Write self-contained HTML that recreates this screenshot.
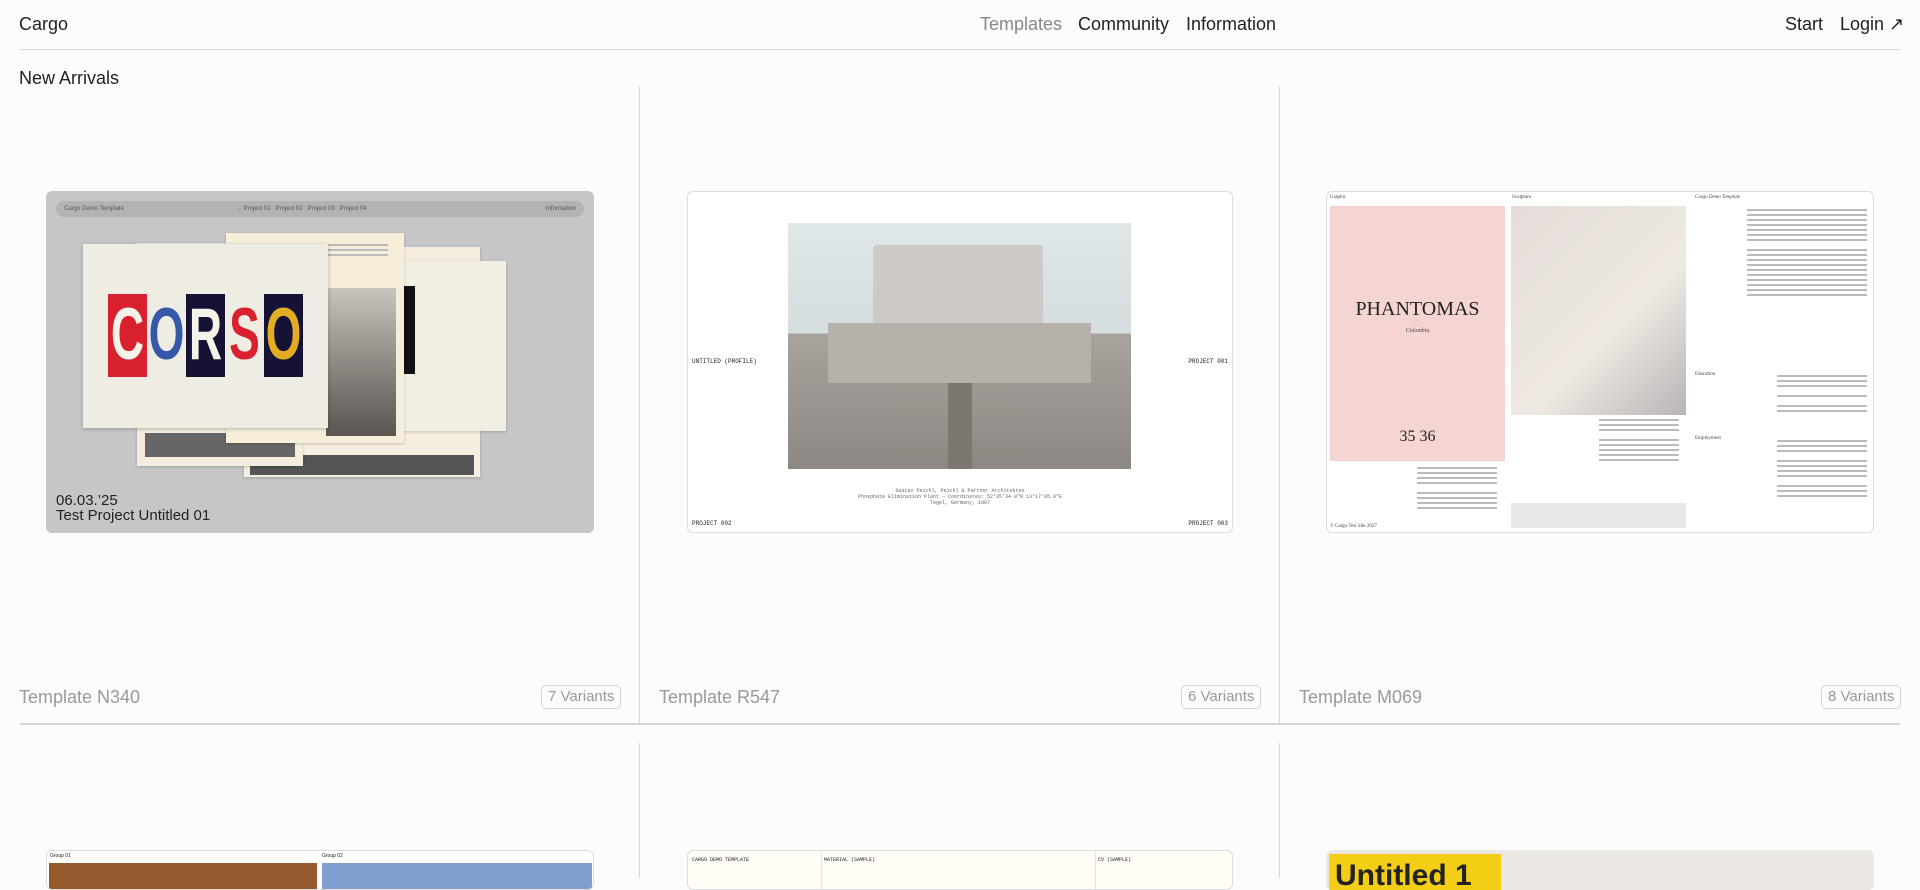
<!DOCTYPE html>
<html><head><meta charset="utf-8"><style>
*{margin:0;padding:0;box-sizing:border-box}
body{width:1920px;height:878px;overflow:hidden;background:#fcfcfc;font-family:"Liberation Sans",sans-serif;color:#222;position:relative}
.a{position:absolute}
.nav{font-size:18px;top:14px}
.vl{position:absolute;width:1px;background:#d6d6d6}
.hl{position:absolute;height:2px;background:#d6d6d6;left:20px;width:1880px}
.lab{font-size:18px;color:#999;top:687px}
.badge{position:absolute;top:685px;height:24px;border:1px solid #d4d4d4;border-radius:5px;font-size:15px;color:#999;padding:2px 6px;line-height:18px}
.card{position:absolute;border-radius:6px;overflow:hidden}
.serif{font-family:"Liberation Serif",serif}
.mono{font-family:"Liberation Mono",monospace}
.tl{background:#bbb;height:2px;margin:3px 0}
.lt{flex:1;position:relative;overflow:hidden}
.lt span{position:absolute;left:0;right:0;top:0;text-align:center;font:bold 46px/52px "Liberation Sans",sans-serif;transform:scaleY(1.6);transform-origin:50% 0;top:-2px}
</style></head><body>
<div class="a nav" style="left:19px">Cargo</div>
<div class="a nav" style="left:980px;color:#888">Templates</div>
<div class="a nav" style="left:1078px">Community</div>
<div class="a nav" style="left:1186px">Information</div>
<div class="a nav" style="left:1785px">Start</div>
<div class="a nav" style="left:1840px">Login ↗</div>
<div class="hl" style="top:49px;height:1px"></div>
<div class="a" style="left:19px;top:68px;font-size:18px">New Arrivals</div>

<div class="vl" style="left:639px;top:86px;height:638px"></div>
<div class="vl" style="left:1279px;top:86px;height:638px"></div>
<div class="hl" style="top:723px"></div>
<div class="vl" style="left:639px;top:743px;height:135px"></div>
<div class="vl" style="left:1279px;top:743px;height:135px"></div>

<!-- card 1 -->
<div class="card" style="left:46px;top:191px;width:548px;height:342px;background:#c6c6c6">
 <div class="a" style="left:10px;top:10px;width:528px;height:16px;border-radius:8px;background:#b3b3b3;font-size:6px;color:#555;line-height:16px">
  <span class="a" style="left:8px">Cargo Demo Template</span>
  <span class="a" style="left:180px">→ Project 01 &nbsp; Project 02 &nbsp; Project 03 &nbsp; Project 04</span>
  <span class="a" style="right:8px">Information</span></div>
 <div class="a" style="left:198px;top:56px;width:236px;height:230px;background:#f6efdf;box-shadow:0 1px 3px rgba(0,0,0,.2)"><div class="a" style="left:6px;top:208px;width:224px;height:20px;background:#555"></div></div>
 <div class="a" style="left:91px;top:52px;width:166px;height:223px;background:#f4eddd;box-shadow:0 1px 3px rgba(0,0,0,.2)"><div class="a" style="left:8px;top:190px;width:150px;height:24px;background:#666"></div></div>
 <div class="a" style="left:307px;top:70px;width:153px;height:170px;background:#f3eee2;box-shadow:0 1px 3px rgba(0,0,0,.2)">
  <div class="a" style="left:2px;top:25px;width:60px;height:88px;background:#111"></div></div>
 <div class="a" style="left:180px;top:42px;width:178px;height:210px;background:#f6eed9;box-shadow:0 1px 3px rgba(0,0,0,.2)">
  <div class="a" style="left:102px;top:8px;width:60px"><div class="tl"></div><div class="tl"></div><div class="tl"></div></div>
  <div class="a" style="left:100px;top:55px;width:70px;height:148px;background:linear-gradient(#c9c4bd,#8f8a84 50%,#5a5550)"></div></div>
 <div class="a" style="left:37px;top:53px;width:245px;height:184px;background:#efece3;box-shadow:0 1px 4px rgba(0,0,0,.25)">
  <div class="a" style="left:25px;top:50px;height:83px;width:195px;display:flex;color:#f5f2ea">
   <div class="lt" style="background:#d8202e"><span>C</span></div><div class="lt"><span style="color:#3558a8">O</span></div><div class="lt" style="background:#151235"><span>R</span></div><div class="lt"><span style="color:#d8202e">S</span></div><div class="lt" style="background:#151235"><span style="color:#e2ad24">O</span></div></div></div>
 <div class="a" style="left:10px;top:302px;font-size:15px;line-height:15px;color:#222">06.03.’25<br>Test Project Untitled 01</div>
</div>
<div class="a lab" style="left:19px">Template N340</div>
<div class="badge" style="left:541px">7 Variants</div>

<!-- card 2 -->
<div class="card" style="left:687px;top:191px;width:546px;height:342px;background:#fff;border:1px solid #ddd">
 <div class="a mono" style="left:4px;top:166px;font-size:6px">UNTITLED (PROFILE)</div>
 <div class="a mono" style="right:4px;top:166px;font-size:6px">PROJECT 001</div>
 <div class="a mono" style="left:4px;top:328px;font-size:6px">PROJECT 002</div>
 <div class="a mono" style="right:4px;top:328px;font-size:6px">PROJECT 003</div>
 <div class="a" style="left:100px;top:31px;width:343px;height:246px;background:linear-gradient(#dfe7e8 0%,#d4dedf 45%,#a9a39e 45%,#8e8883 100%)">
  <div class="a" style="left:85px;top:22px;width:170px;height:80px;background:#cfcac5;border-radius:4px 4px 0 0"></div>
  <div class="a" style="left:40px;top:100px;width:263px;height:60px;background:#b7b1ab"></div>
  <div class="a" style="left:160px;top:160px;width:24px;height:86px;background:#7d7772"></div></div>
 <div class="a mono" style="left:0;width:100%;top:296px;font-size:5px;text-align:center;color:#666;line-height:6px">Gustav Peichl, Peichl &amp; Partner Architekten<br>Phosphate Elimination Plant — Coordinates: 52°35′34.0″N 13°17′05.0″E<br>Tegel, Germany, 1987</div>
</div>
<div class="a lab" style="left:659px">Template R547</div>
<div class="badge" style="left:1181px">6 Variants</div>

<!-- card 3 -->
<div class="card serif" style="left:1326px;top:191px;width:548px;height:342px;background:#fff;border:1px solid #ddd;font-size:5px;color:#444">
 <div class="a" style="left:3px;top:3px">Graphic</div><div class="a" style="left:185px;top:3px">Sculpture</div><div class="a" style="left:368px;top:3px;font-style:italic">Cargo Demo Template</div>
 <div class="a" style="left:3px;top:14px;width:175px;height:255px;background:#f5d5d2">
  <div class="a" style="left:0;width:100%;top:92px;text-align:center;font-size:20px;color:#222">PHANTOMAS</div>
  <div class="a" style="left:0;width:100%;top:122px;text-align:center;font-size:6px;font-style:italic">Colombia</div>
  <div class="a" style="left:0;width:100%;top:222px;text-align:center;font-size:16px;color:#222">35 36</div></div>
 <div class="a" style="left:184px;top:14px;width:175px;height:209px;background:linear-gradient(135deg,#e4dcd8,#efe9e2 60%,#b9b3b6)"></div>
 <div class="a" style="left:184px;top:311px;width:175px;height:25px;background:#e8e8e8"></div>
 <div class="a" style="left:90px;top:272px;width:80px"><div class="tl"></div><div class="tl"></div><div class="tl"></div><div class="tl"></div><div class="tl" style="margin-top:8px"></div><div class="tl"></div><div class="tl"></div><div class="tl"></div></div>
 <div class="a" style="left:272px;top:224px;width:80px"><div class="tl"></div><div class="tl"></div><div class="tl"></div><div class="tl" style="margin-top:8px"></div><div class="tl"></div><div class="tl"></div><div class="tl"></div><div class="tl"></div></div>
 <div class="a" style="left:420px;top:14px;width:120px"><div class="tl"></div><div class="tl"></div><div class="tl"></div><div class="tl"></div><div class="tl"></div><div class="tl"></div><div class="tl"></div><div class="tl" style="margin-top:8px"></div><div class="tl"></div><div class="tl"></div><div class="tl"></div><div class="tl"></div><div class="tl"></div><div class="tl"></div><div class="tl"></div><div class="tl"></div><div class="tl"></div></div>
 <div class="a" style="left:450px;top:180px;width:90px"><div class="tl"></div><div class="tl"></div><div class="tl"></div><div class="tl" style="margin-top:8px"></div><div class="tl" style="margin-top:8px"></div><div class="tl"></div></div>
 <div class="a" style="left:450px;top:245px;width:90px"><div class="tl"></div><div class="tl"></div><div class="tl"></div><div class="tl" style="margin-top:8px"></div><div class="tl"></div><div class="tl"></div><div class="tl"></div><div class="tl" style="margin-top:8px"></div><div class="tl"></div><div class="tl"></div></div>
 <div class="a" style="left:368px;top:180px">Education</div><div class="a" style="left:368px;top:244px">Employment</div>
 <div class="a" style="left:3px;top:332px">© Cargo Test Site 2027</div>
</div>
<div class="a lab" style="left:1299px">Template M069</div>
<div class="badge" style="left:1821px">8 Variants</div>

<!-- row 2 -->
<div class="card" style="left:46px;top:850px;width:548px;height:40px;background:#fff;border:1px solid #ddd">
 <div class="a" style="left:3px;top:2px;font-size:5px">Group 01</div><div class="a" style="left:275px;top:2px;font-size:5px">Group 02</div>
 <div class="a" style="left:2px;top:12px;width:268px;height:30px;background:#955a2e"></div>
 <div class="a" style="left:275px;top:12px;width:270px;height:30px;background:#7f9fcf"></div></div>
<div class="card mono" style="left:687px;top:850px;width:546px;height:40px;background:#fffdf6;border:1px solid #ddd;font-size:5px">
 <div class="a" style="left:4px;top:6px">CARGO DEMO TEMPLATE</div>
 <div class="a" style="left:136px;top:6px">MATERIAL (SAMPLE)</div>
 <div class="a" style="left:410px;top:6px">CV (SAMPLE)</div>
 <div class="a" style="left:133px;top:0;width:1px;height:40px;background:#e2e2e2"></div>
 <div class="a" style="left:407px;top:0;width:1px;height:40px;background:#e2e2e2"></div></div>
<div class="card" style="left:1326px;top:850px;width:548px;height:40px;background:#ebe8e4">
 <div class="a" style="left:3px;top:4px;width:172px;height:40px;background:#f4cd15;font:bold 30px/44px 'Liberation Sans',sans-serif;color:#222;padding-left:6px">Untitled 1</div></div>
</body></html>
